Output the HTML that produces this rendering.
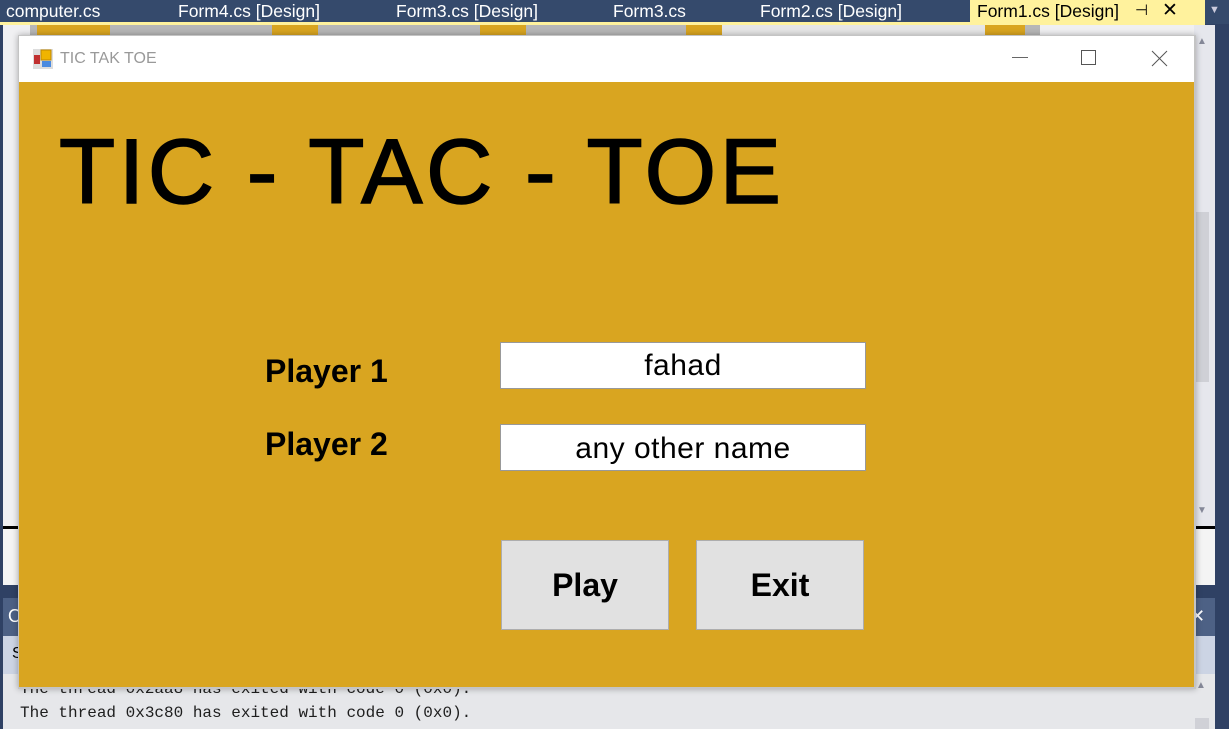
<!DOCTYPE html>
<html><head><style>
*{margin:0;padding:0;box-sizing:border-box}
body{width:1229px;height:729px;overflow:hidden;position:relative;background:#2f4164;font-family:"Liberation Sans",sans-serif}
.a{position:absolute}
.t{color:#fff;font-size:17.5px;top:1px}
</style></head><body>
<div class="a" style="left:0;top:0;width:1229px;height:24px;background:#354a6c"></div>
<div class="a" style="left:0;top:22px;width:1205px;height:3px;background:#fff29d"></div>
<div class="a t" style="left:6px">computer.cs</div>
<div class="a t" style="left:178px">Form4.cs [Design]</div>
<div class="a t" style="left:396px">Form3.cs [Design]</div>
<div class="a t" style="left:613px">Form3.cs</div>
<div class="a t" style="left:760px">Form2.cs [Design]</div>
<div class="a" style="left:970px;top:0;width:235px;height:24px;background:#fff29d"></div>
<div class="a t" style="left:977px;color:#000">Form1.cs [Design]</div>
<div class="a" style="left:1135px;top:1px;color:#000;font-size:15px">⊣</div>
<div class="a" style="left:1162px;top:-1px;color:#000;font-size:19px">✕</div>
<div class="a" style="left:1209px;top:4px;color:#ccd;font-size:11px">▼</div>
<div class="a" style="left:3px;top:25px;width:1210px;height:560px;background:#f0f0f2"></div>
<div class="a" style="left:30px;top:25px;width:1010px;height:12px;background:#b7b7b7"></div>
<div class="a" style="left:37px;top:25px;width:73px;height:12px;background:#d9a520"></div>
<div class="a" style="left:272px;top:25px;width:46px;height:12px;background:#d9a520"></div>
<div class="a" style="left:480px;top:25px;width:46px;height:12px;background:#d9a520"></div>
<div class="a" style="left:686px;top:25px;width:36px;height:12px;background:#d9a520"></div>
<div class="a" style="left:722px;top:25px;width:263px;height:12px;background:#e6e6e6"></div>
<div class="a" style="left:985px;top:25px;width:40px;height:12px;background:#d9a520"></div>
<div class="a" style="left:1194px;top:25px;width:21px;height:560px;background:#e6e7ed"></div>
<div class="a" style="left:1196px;top:212px;width:13px;height:170px;background:#cfd0d6"></div>
<div class="a" style="left:1197px;top:36px;color:#868999;font-size:10px">▲</div>
<div class="a" style="left:1197px;top:505px;color:#868999;font-size:10px">▼</div>
<div class="a" style="left:3px;top:526px;width:1212px;height:3px;background:#000"></div>
<div class="a" style="left:3px;top:529px;width:1212px;height:56px;background:#f4f4f4"></div>
<div class="a" style="left:3px;top:598px;width:1212px;height:38px;background:#4d6185"></div>
<div class="a" style="left:8px;top:606px;color:#fff;font-size:18px">O</div>
<div class="a" style="left:1190px;top:606px;color:#fff;font-size:18px">✕</div>
<div class="a" style="left:3px;top:636px;width:1212px;height:38px;background:#ccd4e4"></div>
<div class="a" style="left:12px;top:645px;color:#000;font-size:16px">S</div>
<div class="a" style="left:3px;top:674px;width:1212px;height:55px;background:#e6e7ea"></div>
<div class="a" style="left:20px;top:677px;font-family:'Liberation Mono',monospace;font-size:16px;color:#1e1e1e;line-height:24px">The thread 0x2aa8 has exited with code 0 (0x0).<br>The thread 0x3c80 has exited with code 0 (0x0).</div>
<div class="a" style="left:1196px;top:680px;color:#868999;font-size:10px">▲</div>
<div class="a" style="left:1195px;top:718px;width:14px;height:11px;background:#d0d1d7"></div>
<div class="a" style="left:18px;top:35px;width:1178px;height:654px;background:#c4c4c4;box-shadow:0 0 6px rgba(0,0,0,.3)"></div>
<div class="a" style="left:19px;top:36px;width:1175px;height:46px;background:#fff"></div>
<div class="a" style="left:33px;top:49px;width:20px;height:20px">
<svg width="20" height="20"><rect x="0" y="0" width="20" height="20" fill="#ddd"/><rect x="8" y="1" width="10" height="10" fill="#f0b400" stroke="#c08800"/><rect x="1" y="6" width="6" height="9" fill="#c03030"/><rect x="9" y="12" width="9" height="6" fill="#4a8ae0"/></svg></div>
<div class="a" style="left:60px;top:50px;color:#999;font-size:16px">TIC TAK TOE</div>
<div class="a" style="left:1012px;top:57px;width:16px;height:1px;background:#666"></div>
<div class="a" style="left:1081px;top:50px;width:15px;height:15px;border:1px solid #555"></div>
<svg class="a" style="left:1151px;top:50px" width="17" height="17"><path d="M1 1L16 16M16 1L1 16" stroke="#555" stroke-width="1"/></svg>
<div class="a" style="left:19px;top:82px;width:1175px;height:605px;background:#d9a520"></div>
<div class="a" style="left:59px;top:120px;font-size:92px;color:#000;white-space:nowrap;letter-spacing:3.5px;-webkit-text-stroke:1.5px #000">TIC - TAC - TOE</div>
<div class="a" style="left:265px;top:353px;font-size:32px;font-weight:bold">Player 1</div>
<div class="a" style="left:265px;top:426px;font-size:32px;font-weight:bold">Player 2</div>
<div class="a" style="left:500px;top:342px;width:366px;height:47px;background:#fff;border:1px solid #999;text-align:center;font-size:30px;line-height:45px;letter-spacing:0.5px">fahad</div>
<div class="a" style="left:500px;top:424px;width:366px;height:47px;background:#fff;border:1px solid #999;text-align:center;font-size:30px;line-height:47px;letter-spacing:0.5px">any other name</div>
<div class="a" style="left:501px;top:540px;width:168px;height:90px;background:#e1e1e1;border:1px solid #adadad;text-align:center;font-size:32px;font-weight:bold;line-height:88px">Play</div>
<div class="a" style="left:696px;top:540px;width:168px;height:90px;background:#e1e1e1;border:1px solid #adadad;text-align:center;font-size:32px;font-weight:bold;line-height:88px">Exit</div>
</body></html>
